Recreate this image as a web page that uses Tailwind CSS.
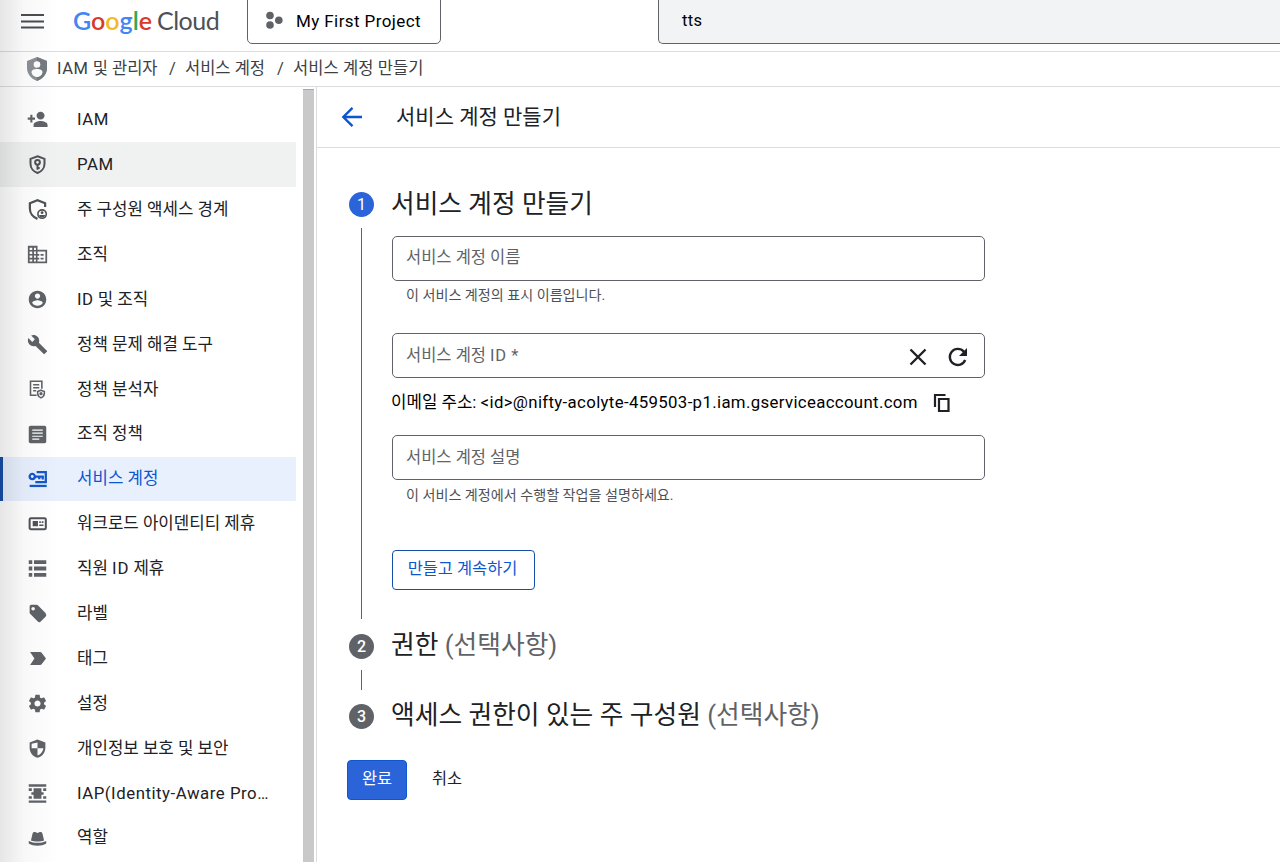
<!DOCTYPE html>
<html lang="ko">
<head>
  <meta charset="UTF-8">
  <title>서비스 계정 만들기</title>
  <script src="https://cdn.jsdelivr.net/npm/@tailwindcss/browser@4"></script>
</head>
<body class="relative h-[862px] w-[1280px] overflow-hidden bg-white text-[#202124] font-[Roboto,'Noto_Sans_CJK_KR',sans-serif]">

  <!-- Top bar -->
  <header class="flex h-[52px] items-start border-b border-[#dadce0]">
    <button class="mt-[10px] ml-[21px] h-[22px] w-[23px]" aria-label="Menu">
      <svg class="h-[22px] w-[23px]" viewBox="0 0 23 22" fill="#4a4d51"><path d="M0 4h23v2H0zM0 10.400h23v2H0zM0 16.600h23v2H0z"/></svg>
    </button>
    <div class="mt-[5px] ml-[29px] flex w-[174px] whitespace-nowrap text-[25px] leading-[30px] font-[Lato,sans-serif]">
      <div class="w-[84px] font-semibold tracking-[0px]"><span class="text-[#4285f4]">G</span><span class="text-[#d93a2e]">o</span><span class="text-[#f5b926]">o</span><span class="text-[#4285f4]">g</span><span class="text-[#34a853]">l</span><span class="text-[#d93a2e]">e</span></div>
      <div class="tracking-[-0.500px] text-[#4d5156]">Cloud</div>
    </div>
    <button class="-mt-[8px] flex h-[52px] w-[194px] items-center rounded-[5px] border border-[#5f6368] pt-[7px] pl-[17px]">
      <svg class="-mt-[2px] h-[19px] w-[19px]" viewBox="0 0 19 19" fill="#5f6368"><circle cx="5" cy="4.500" r="3.800"/><circle cx="5" cy="14" r="3.800"/><circle cx="13.800" cy="9.300" r="3.800"/></svg>
      <span class="ml-[12px] text-[17px] tracking-[0.400px] text-black">My First Project</span>
    </button>
    <div class="-mt-[8px] ml-[217px] flex h-[52px] flex-1 items-center rounded-l-[5px] border border-r-0 border-[#5f6368] bg-[#f1f3f4] pt-[7px] pl-[23px] text-[16.500px] tracking-[0.400px] text-black">tts</div>
  </header>

  <!-- Breadcrumb -->
  <nav class="flex h-[35px] items-center border-b border-[#dadce0] pl-[26px] text-[16.500px] text-[#3c4043]">
    <svg class="h-[24px] w-[22px]" viewBox="0 0 22 24"><path fill="#8b9197" d="M11 0l10 4v7c0 6-4.300 11-10 13C5.300 22 1 17 1 11V4z"/><path fill="#757b81" d="M11 0l10 4v7c0 6-4.300 11-10 13z"/><circle cx="11" cy="7.500" r="3.300" fill="#fff"/><path fill="#fff" d="M11 12c3 0 5.500 1.200 5.500 3.200S14 20 11 20s-5.500-2.800-5.500-4.800S8 12 11 12z"/></svg>
    <span class="ml-[9px] w-[112px] whitespace-nowrap"><span class="tracking-[0.600px]">IAM</span> 및 관리자</span>
    <span class="w-[16px]">/</span>
    <span class="w-[92px] whitespace-nowrap">서비스 계정</span>
    <span class="w-[16px]">/</span>
    <span class="tracking-[0.100px]">서비스 계정 만들기</span>
  </nav>

  <div class="flex h-[775px]">

    <!-- Sidebar -->
    <aside class="w-[303px] pt-[10.400px] text-[16.800px]">
      <ul class="w-[296px] text-[#202124]">
        <li class="flex h-[44.900px] items-center pl-[27px]">
          <svg class="mr-[29px] h-[21px] w-[21px]" viewBox="0 0 24 24" fill="#5f6368"><path d="M15.500 12c2.600 0 4.600-2 4.600-4.500S18.100 3 15.500 3s-4.600 2-4.600 4.500S12.900 12 15.500 12zM6.200 9.800V6.500H3.800v3.300H.8v2.400h3v3.300h2.400v-3.300h3V9.800zM15.500 13.800c-3 0-8 1.200-8 4.400V20.500h16v-2.300c0-3.200-5-4.400-8-4.400z"/></svg>
          <span class="tracking-[0.500px]">IAM</span>
        </li>
        <li class="flex h-[44.900px] items-center bg-[#f0f2f1] pl-[27px]">
          <svg class="mr-[29px] h-[21px] w-[21px]" viewBox="0 0 24 24" fill="none" stroke="#4f5357" stroke-width="2.300"><path d="M12 2.600l8 3v5.400c0 5-3.400 9.200-8 10.700C7.400 20.200 4 16 4 11V5.600z"/><circle cx="12" cy="9.500" r="2.700"/><path d="M12 12v6M12 16h2.500"/></svg>
          <span class="tracking-[0.500px]">PAM</span>
        </li>
        <li class="flex h-[44.900px] items-center pl-[27px]">
          <svg class="mr-[29px] h-[23px] w-[21px]" viewBox="0 0 22 24" fill="none" stroke="#4f5357" stroke-width="2.300"><path d="M19 9.500V5.500l-8-3.200-8 3.200V11c0 4.800 3.300 9.200 8 10.800"/><circle cx="15.800" cy="16.800" r="4.400" stroke-width="1.700"/><circle cx="15.800" cy="15.300" r="1.500" fill="#4f5357" stroke="none"/><path d="M12.500 17.800h6.600c-.5 1.800-1.800 2.600-3.300 2.600s-2.800-.8-3.300-2.600z" fill="#4f5357" stroke="none"/></svg>
          <span>주 구성원 액세스 경계</span>
        </li>
        <li class="flex h-[44.900px] items-center pl-[27px]">
          <svg class="mr-[29px] h-[21px] w-[21px]" viewBox="0 0 24 24" fill="#5f6368"><path fill-rule="evenodd" d="M1 2h11v4.500h11V22H1zM3 4.200v2.600h3V4.200zM8 4.200v2.600h2.200V4.200zM3 8.700v2.600h3V8.700zM8 8.700v2.600h2.200V8.700zM3 13.200v2.600h3v-2.600zM8 13.200v2.600h2.200v-2.600zM3 17.600V20h3v-2.400zM8 17.600V20h2.200v-2.400zM12 8.700v2.600h2v2h-2v2.500h2v2h-2V20h9V8.700z"/><path d="M15.500 11.300h3.500v2h-3.500zM15.500 15.700h3.500v2h-3.500z"/></svg>
          <span>조직</span>
        </li>
        <li class="flex h-[44.900px] items-center pl-[27px]">
          <svg class="mr-[29px] h-[21px] w-[21px]" viewBox="0 0 24 24" fill="#5f6368"><path d="M12 2C6.480 2 2 6.480 2 12s4.480 10 10 10 10-4.480 10-10S17.520 2 12 2zm0 3c1.660 0 3 1.340 3 3s-1.340 3-3 3-3-1.340-3-3 1.340-3 3-3zm0 14.200c-2.500 0-4.710-1.280-6-3.220.030-1.990 4-3.080 6-3.080 1.990 0 5.970 1.090 6 3.080-1.290 1.940-3.500 3.220-6 3.220z"/></svg>
          <span><span class="tracking-[0.500px]">ID</span> 및 조직</span>
        </li>
        <li class="flex h-[44.900px] items-center pl-[27px]">
          <svg class="mr-[29px] h-[21px] w-[21px]" viewBox="0 0 24 24" fill="#5f6368"><path d="M22.700 19l-9.100-9.100c.9-2.300.4-5-1.500-6.900-2-2-5-2.400-7.400-1.300L9 6 6 9 1.600 4.700C.4 7.100.9 10.100 2.900 12.100c1.900 1.900 4.600 2.400 6.900 1.500l9.100 9.100c.4.4 1 .4 1.400 0l2.300-2.300c.5-.4.5-1.100.1-1.400z"/></svg>
          <span>정책 문제 해결 도구</span>
        </li>
        <li class="flex h-[44.900px] items-center pl-[27px]">
          <svg class="mr-[29px] h-[21px] w-[21px]" viewBox="0 0 24 24" fill="none" stroke="#5f6368" stroke-width="1.800"><path d="M11 18.500H4V2.500h13V11M7 6.500h7M7 10h7M7 13.500h3.500"/><path d="M16 12.800l3.800 1.400v2.500c0 2.300-1.600 3.900-3.800 4.900-2.200-1-3.800-2.600-3.800-4.900v-2.500z"/><circle cx="16" cy="16.800" r="1"/></svg>
          <span>정책 분석자</span>
        </li>
        <li class="flex h-[44.900px] items-center pl-[27px]">
          <svg class="mr-[29px] h-[21px] w-[21px]" viewBox="0 0 24 24"><rect x="2" y="2" width="20" height="20" rx="2" fill="#5f6368"/><path d="M6 7h12M6 10.500h12M6 14h12M6 17.300h8" stroke="#fff" stroke-width="1.400"/></svg>
          <span>조직 정책</span>
        </li>
        <li class="flex h-[44.900px] items-center border-l-[3px] border-[#174ea6] bg-[#e8f0fe] pl-[24px] text-[#0b57d0]">
          <svg class="mr-[29px] h-[21px] w-[21px]" viewBox="0 0 24 24" fill="none" stroke="#1558c9"><circle cx="6" cy="9.800" r="3" stroke-width="2.600"/><path stroke-width="2.600" d="M9 9.800h9v3.200M14 9.800v3M11 4.700h10.500v11.500H9.500"/><path stroke-width="2.600" d="M3 20.500h19.500"/></svg>
          <span>서비스 계정</span>
        </li>
        <li class="flex h-[44.900px] items-center pl-[27px]">
          <svg class="mr-[29px] h-[21px] w-[21px]" viewBox="0 0 24 24"><rect x="3" y="6" width="18.500" height="12.500" rx="1.500" fill="none" stroke="#4f5357" stroke-width="2.300"/><path fill="#4f5357" d="M6.500 9.200h6v6h-6zM14 9.500h1.800v1.800H14zM16.800 9.500h2v1.800h-2zM14 13h4.800v1.800H14z"/></svg>
          <span>워크로드 아이덴티티 제휴</span>
        </li>
        <li class="flex h-[44.900px] items-center pl-[27px]">
          <svg class="mr-[29px] h-[21px] w-[21px]" viewBox="0 0 24 24" fill="#5f6368"><path d="M2 2.500h4v4.400H2zM8 2.500h14v4.400H8zM2 9.800h4v4.400H2zM8 9.800h14v4.400H8zM2 17h4v4.400H2zM8 17h14v4.400H8z"/></svg>
          <span>직원 <span class="tracking-[0.800px]">ID</span> 제휴</span>
        </li>
        <li class="flex h-[44.900px] items-center pl-[27px]">
          <svg class="mr-[29px] h-[21px] w-[21px]" viewBox="0 0 24 24" fill="#5f6368"><path d="M21.410 11.580l-9-9C12.050 2.220 11.550 2 11 2H5C3.900 2 3 2.900 3 4v7c0 .55.220 1.050.590 1.420l9 9c.36.36.860.580 1.410.580s1.050-.220 1.410-.590l6-6c.370-.360.590-.860.590-1.410s-.230-1.060-.590-1.420zM7 8.500C6 8.500 5 7.700 5 6.500S6 4.500 7 4.500s2 .8 2 2-1 2-2 2z"/></svg>
          <span>라벨</span>
        </li>
        <li class="flex h-[44.900px] items-center pl-[27px]">
          <svg class="mr-[29px] h-[21px] w-[21px]" viewBox="0 0 24 24" fill="#5f6368"><path d="M3.500 19.500L8.500 12l-5-7.500H15c.7 0 1.300.3 1.700.9L21.700 12l-5 6.600c-.4.600-1 .9-1.700.9z"/></svg>
          <span>태그</span>
        </li>
        <li class="flex h-[44.900px] items-center pl-[27px]">
          <svg class="mr-[29px] h-[21px] w-[21px]" viewBox="0 0 24 24" fill="#5f6368"><path d="M19.430 12.980c.040-.32.070-.64.070-.98s-.030-.66-.070-.98l2.110-1.650c.190-.150.240-.42.120-.64l-2-3.460c-.120-.22-.390-.3-.61-.22l-2.490 1c-.52-.4-1.080-.73-1.690-.98l-.38-2.650C14.460 2.180 14.250 2 14 2h-4c-.25 0-.46.180-.49.420l-.38 2.650c-.61.250-1.170.590-1.690.98l-2.490-1c-.23-.090-.49 0-.61.220l-2 3.460c-.130.220-.070.490.120.64l2.110 1.650c-.040.320-.070.650-.070.980s.030.660.070.980l-2.110 1.650c-.190.150-.240.420-.120.640l2 3.460c.120.220.390.3.610.220l2.490-1c.52.4 1.080.73 1.690.98l.38 2.650c.030.240.240.420.490.420h4c.25 0 .46-.180.49-.42l.38-2.650c.61-.25 1.170-.59 1.690-.98l2.490 1c.230.090.49 0 .61-.22l2-3.460c.120-.22.070-.49-.120-.64l-2.110-1.650zM12 15.500c-1.930 0-3.500-1.570-3.500-3.500s1.570-3.500 3.500-3.500 3.500 1.570 3.500 3.500-1.570 3.500-3.500 3.500z"/></svg>
          <span>설정</span>
        </li>
        <li class="flex h-[44.900px] items-center pl-[27px]">
          <svg class="mr-[29px] h-[21px] w-[21px]" viewBox="0 0 24 24"><path fill="#5f6368" d="M12 1.600L3 5v6c0 5.550 3.840 10.200 9 11.500 5.160-1.300 9-5.950 9-11.500V5z"/><path fill="#fff" d="M12 5v6.700H5.300V6.500zM12 11.700h6.700c-.5 3.800-3.200 7.300-6.700 8.300z"/></svg>
          <span>개인정보 보호 및 보안</span>
        </li>
        <li class="flex h-[44.900px] items-center pl-[27px]">
          <svg class="mr-[29px] h-[21px] w-[21px]" viewBox="0 0 24 24" fill="#5f6368"><path d="M2 1.500h20v2.700H2zM2 20h20v2.700H2zM7.500 6h9v12h-9zM2 6h3.500v3H2zM18.500 6H22v3h-3.500zM5 10.500h14v2.800H5zM2 15h3.500v3H2zM18.500 15H22v3h-3.500z"/></svg>
          <span class="tracking-[0.530px]">IAP(Identity-Aware Pro…</span>
        </li>
        <li class="flex h-[44.900px] items-center pl-[27px]">
          <svg class="mr-[29px] h-[21px] w-[21px]" viewBox="0 0 24 24" fill="#5f6368"><path d="M4.500 14.200L6.300 6.500C6.700 4.700 8 4.200 9.300 4.700l2.700 1 2.700-1c1.300-.5 2.600 0 3 1.800l1.800 7.700c-4 1.500-11 1.500-15 0zM2 14.800c6 2.900 14 2.900 20 0v2.900c-5.500 3.300-14.500 3.300-20 0z"/></svg>
          <span>역할</span>
        </li>
      </ul>
    </aside>

    <!-- Sidebar scrollbar -->
    <div class="mt-[2px] w-[11px] border-t border-[#a8a8a8] bg-[#c9c9c9]"></div>
    <div class="w-[3px] border-r border-[#dadce0]"></div>

    <!-- Main -->
    <main class="flex-1">
      <div class="flex h-[61px] items-center border-b border-[#dadce0] pl-[24px]">
        <svg class="h-[22px] w-[22px]" viewBox="0 0 22 22" fill="none" stroke="#0b57d0" stroke-width="2.400"><path d="M21 11H2.500M11.500 1.800L2.300 11l9.200 9.200"/></svg>
        <h1 class="mt-[2px] ml-[33px] text-[21px]">서비스 계정 만들기</h1>
      </div>

      <!-- Step 1 -->
      <section class="mt-[36px] flex h-[441px] pl-[32px]">
        <div class="flex w-[25px] flex-col items-center pt-[8px]">
          <div class="flex h-[25px] w-[25px] items-center justify-center rounded-full bg-[#2b63d9] text-[16px] text-white">1</div>
          <div class="mt-[11px] -ml-px h-[391px] w-px bg-[#5f6368]"></div>
        </div>
        <div class="ml-[18px] w-[593px]">
          <h2 class="h-[52px] pt-px -ml-px text-[25.700px] leading-[38px]">서비스 계정 만들기</h2>
          <div class="flex h-[45px] items-center rounded-[5px] border border-[#5f6368] pl-[13px] text-[16.500px] text-[#5f6368]">서비스 계정 이름</div>
          <p class="mt-[4px] h-[48px] pl-[14px] text-[14.100px] leading-[20px] text-[#4d5156]">이 서비스 계정의 표시 이름입니다.</p>
          <div class="flex h-[45px] items-center rounded-[5px] border border-[#5f6368] pl-[13px] text-[16.500px] text-[#5f6368]">
            <span class="flex-1 pt-px">서비스 계정 <span class="tracking-[0.600px]">ID *</span></span>
            <svg class="mt-[2px] h-[18px] w-[18px]" viewBox="0 0 18 18" stroke="#202124" stroke-width="2.400"><path d="M1.500 1.500l15 15M16.500 1.500l-15 15"/></svg>
            <svg class="mt-[2px] mr-[15px] ml-[20px] h-[22px] w-[22px]" viewBox="0 0 22 22" fill="none" stroke="#202124" stroke-width="2.400"><path d="M18.200 14a8 8 0 1 1-1.300-8.300"/><path d="M20 2v8h-8z" fill="#202124" stroke="none"/></svg>
          </div>
          <div class="flex h-[57px] items-center pb-[7px] text-[16.800px] whitespace-nowrap text-black">
            <span class="-ml-px w-[542px]">이메일 주소: <span class="tracking-[0.350px]">&lt;id&gt;@nifty-acolyte-459503-p1.iam.gserviceaccount.com</span></span>
            <svg class="h-[20px] w-[17px]" viewBox="0 0 17 20" fill="none" stroke="#202124" stroke-width="2.200"><path d="M2 14V2h10.500"/><path d="M6 6h9.500v12H6z"/></svg>
          </div>
          <div class="flex h-[45px] items-center rounded-[5px] border border-[#5f6368] pt-px pl-[13px] text-[16.500px] text-[#5f6368]">서비스 계정 설명</div>
          <p class="mt-[5px] h-[65px] pl-[14px] text-[14.100px] leading-[20px] text-[#4d5156]">이 서비스 계정에서 수행할 작업을 설명하세요.</p>
          <button class="h-[40px] w-[143px] rounded-[4px] border border-[#174ea6] pr-[2px] pb-px text-[16.400px] text-[#0b57d0]">만들고 계속하기</button>
        </div>
      </section>

      <!-- Step 2 -->
      <section class="flex h-[70px] pl-[32px]">
        <div class="flex w-[25px] flex-col items-center pt-[9px]">
          <div class="flex h-[25px] w-[25px] items-center justify-center rounded-full bg-[#5f6368] text-[16px] font-medium text-white">2</div>
          <div class="mt-[11px] -ml-px h-[20px] w-px bg-[#5f6368]"></div>
        </div>
        <h2 class="ml-[17px] pt-px text-[25.750px] leading-[38px]">권한 <span class="text-[#5f6368]">(선택사항)</span></h2>
      </section>

      <!-- Step 3 -->
      <section class="flex h-[65px] pl-[32px]">
        <div class="pt-[9px]">
          <div class="flex h-[25px] w-[25px] items-center justify-center rounded-full bg-[#5f6368] text-[16px] font-medium text-white">3</div>
        </div>
        <h2 class="ml-[17px] pt-px text-[25.750px] leading-[38px]">액세스 권한이 있는 주 구성원 <span class="text-[#5f6368]">(선택사항)</span></h2>
      </section>

      <div class="flex pl-[30px] text-[16.400px]">
        <button class="h-[40px] w-[60px] rounded-[4px] border border-[#0b57d0] bg-[#2b63d9] pb-px text-white">완료</button>
        <button class="ml-[25px] h-[40px] pb-px">취소</button>
      </div>
    </main>
  </div>

  <!-- Soft shadow on the left edge -->
  <div class="pointer-events-none absolute inset-y-0 left-0 w-[58px] bg-linear-to-r from-black/10 via-black/3 via-40% to-transparent"></div>

</body>
</html>
